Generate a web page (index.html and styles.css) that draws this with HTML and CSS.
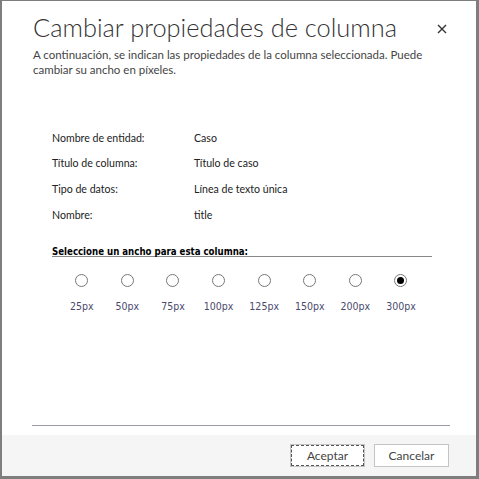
FILE: index.html
```html
<!DOCTYPE html>
<html lang="es">
<head>
    <meta charset="UTF-8">
    <title>Cambiar propiedades de columna</title>
    <link rel="stylesheet" href="styles.css">
</head>
<body>
    <div class="dialog">
        <div class="dialog-header">
            <h1 class="dialog-title">Cambiar propiedades de columna</h1>
            <button class="close-btn" title="Cerrar">
                <svg width="10" height="10" viewBox="0 0 10 10"><path d="M1 1L9 9M9 1L1 9" stroke="#333" stroke-width="1.4"/></svg>
            </button>
        </div>
        <p class="dialog-desc">A continuación, se indican las propiedades de la columna seleccionada. Puede cambiar su ancho en píxeles.</p>

        <div class="props">
            <div class="prop-label">Nombre de entidad:</div>
            <div class="prop-value">Caso</div>
            <div class="prop-label">Título de columna:</div>
            <div class="prop-value">Título de caso</div>
            <div class="prop-label">Tipo de datos:</div>
            <div class="prop-value">Línea de texto única</div>
            <div class="prop-label">Nombre:</div>
            <div class="prop-value">title</div>
        </div>

        <div class="width-section">
            <div class="section-title">Seleccione un ancho para esta columna:</div>
            <div class="width-options">
                <label class="width-option"><span class="radio"></span><span class="option-text">25px</span></label>
                <label class="width-option"><span class="radio"></span><span class="option-text">50px</span></label>
                <label class="width-option"><span class="radio"></span><span class="option-text">75px</span></label>
                <label class="width-option"><span class="radio"></span><span class="option-text">100px</span></label>
                <label class="width-option"><span class="radio"></span><span class="option-text">125px</span></label>
                <label class="width-option"><span class="radio"></span><span class="option-text">150px</span></label>
                <label class="width-option"><span class="radio"></span><span class="option-text">200px</span></label>
                <label class="width-option"><span class="radio checked"></span><span class="option-text">300px</span></label>
            </div>
        </div>

        <div class="spacer"></div>
        <div class="footer-rule"></div>
        <div class="dialog-footer">
            <button class="footer-btn focused">Aceptar</button>
            <button class="footer-btn">Cancelar</button>
        </div>
    </div>
</body>
</html>
```

FILE: styles.css
```css
html, body {
    margin: 0;
    padding: 0;
    height: 100%;
}
body {
    background-color: #7e7e7e;
    font-family: Lato, "Open Sans", sans-serif;
    overflow: hidden;
}
.dialog {
    margin: 1px 2px 0 2px;
    width: 474px;
    height: 475px;
    background-color: #fff;
    display: flex;
    flex-direction: column;
    box-sizing: border-box;
}
.dialog-header {
    display: flex;
    justify-content: space-between;
    align-items: flex-start;
    padding: 11px 29px 0 31px;
}
.dialog-title {
    margin: 0;
    font-family: Lato, sans-serif;
    font-weight: 300;
    font-size: 25.4px;
    line-height: 30px;
    color: #333;
}
.close-btn {
    background: none;
    border: none;
    padding: 0;
    margin-top: 12px;
    cursor: pointer;
    line-height: 0;
}
.dialog-desc {
    margin: 5px 30px 0 31px;
    font-size: 11.5px;
    line-height: 15px;
    color: #444;
}
.props {
    display: grid;
    grid-template-columns: 142px 1fr;
    grid-auto-rows: 25.6px;
    align-items: center;
    margin: 48px 0 0 50px;
    font-size: 10.6px;
    color: #222;
}
.width-section {
    margin: 21px 44px 0 50px;
}
.section-title {
    font-family: "DejaVu Sans Condensed", "DejaVu Sans", sans-serif;
    font-weight: bold;
    font-size: 9.6px;
    line-height: 8px;
    color: #000;
    border-bottom: 1px solid #888;
}
.width-options {
    display: flex;
    padding: 17px 0 0 7px;
}
.width-option {
    width: 45.6px;
    display: flex;
    flex-direction: column;
    align-items: center;
    gap: 13px;
    cursor: pointer;
}
.radio {
    width: 11px;
    height: 11px;
    border: 1px solid #777;
    border-radius: 50%;
    display: flex;
    align-items: center;
    justify-content: center;
    background: #fff;
}
.radio.checked::after {
    content: "";
    width: 7px;
    height: 7px;
    border-radius: 50%;
    background: #000;
}
.option-text {
    font-family: "DejaVu Sans Condensed", "DejaVu Sans", sans-serif;
    font-size: 10.5px;
    color: #4a4a6e;
}
.spacer {
    flex-grow: 1;
}
.footer-rule {
    margin: 0 26px 0 30px;
    border-top: 1px solid #9a9aa8;
}
.dialog-footer {
    margin-top: 9px;
    height: 41px;
    background-color: #f5f5f5;
    display: flex;
    justify-content: flex-end;
    align-items: flex-start;
    gap: 9px;
    padding: 9px 27px 0 0;
    box-sizing: border-box;
}
.footer-btn {
    width: 75px;
    height: 23px;
    background-color: #fff;
    border: 1px solid #c4c4c4;
    font-family: Lato, sans-serif;
    font-size: 12px;
    color: #444;
    padding: 0;
    cursor: pointer;
}
.footer-btn.focused {
    outline: 1px dashed #555;
    outline-offset: -2px;
}
```
